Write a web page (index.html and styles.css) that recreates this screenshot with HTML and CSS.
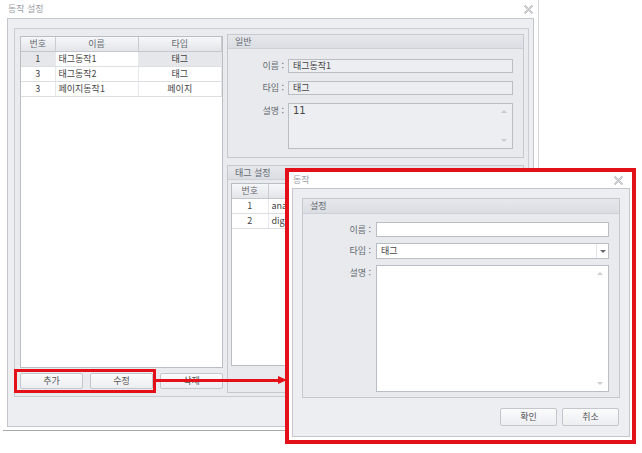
FILE: index.html
```html
<!DOCTYPE html>
<html lang="ko">
<head>
<meta charset="utf-8">
<title>동작 설정</title>
<link rel="stylesheet" href="styles.css">
</head>
<body>
<div class="window main">
  <div class="titlebar">
    <span class="title">동작 설정</span>
    <svg class="close" viewBox="0 0 10 10" width="9" height="9"><polygon points="1.2,0.5 5,4.1 8.8,0.5 9.5,1.2 5.9,5 9.5,8.8 8.8,9.5 5,5.9 1.2,9.5 0.5,8.8 4.1,5 0.5,1.2" fill="#fff" stroke="#8a8d92" stroke-width="0.8"/></svg>
  </div>
  <div class="frame">
    <div class="panel">
      <div class="left-col">
        <div class="grid list">
          <table>
            <colgroup><col class="c-no"><col class="c-name"><col></colgroup>
            <thead><tr><th>번호</th><th>이름</th><th>타입</th></tr></thead>
            <tbody>
              <tr class="sel"><td class="ctr">1</td><td class="focus">태그동작1</td><td class="ctr">태그</td></tr>
              <tr><td class="ctr">3</td><td>태그동작2</td><td class="ctr">태그</td></tr>
              <tr><td class="ctr">3</td><td>페이지동작1</td><td class="ctr">페이지</td></tr>
            </tbody>
          </table>
        </div>
        <div class="btn-row">
          <button class="btn">추가</button>
          <button class="btn">수정</button>
          <button class="btn">삭제</button>
        </div>
      </div>
      <div class="right-col">
        <div class="group general">
          <div class="group-head">일반</div>
          <div class="form form-general">
            <label>이름 :</label><div class="field disabled">태그동작1</div>
            <label>타입 :</label><div class="field disabled">태그</div>
            <label>설명 :</label><div class="field disabled memo memo-small"><span class="big">11</span><span class="sb-up"></span><span class="sb-down"></span></div>
          </div>
        </div>
        <div class="group tags">
          <div class="group-head">태그 설정</div>
          <div class="grid tag-grid">
            <table>
              <colgroup><col class="c-tno"><col></colgroup>
              <thead><tr><th>번호</th><th></th></tr></thead>
              <tbody>
                <tr><td class="ctr">1</td><td>anak</td></tr>
                <tr><td class="ctr">2</td><td>digit</td></tr>
              </tbody>
            </table>
          </div>
        </div>
      </div>
    </div>
  </div>
</div>

<div class="hl-box"></div>
<div class="arrow-line"></div>
<div class="arrow-head"></div>

<div class="dialog">
  <div class="titlebar dlg-title">
    <span class="title">동작</span>
    <svg class="close" viewBox="0 0 10 10" width="9" height="9"><polygon points="1.2,0.5 5,4.1 8.8,0.5 9.5,1.2 5.9,5 9.5,8.8 8.8,9.5 5,5.9 1.2,9.5 0.5,8.8 4.1,5 0.5,1.2" fill="#fff" stroke="#8a8d92" stroke-width="0.8"/></svg>
  </div>
  <div class="frame dlg-frame">
    <div class="group settings">
      <div class="group-head">설정</div>
      <div class="form form-dialog">
        <label>이름 :</label><div class="field"></div>
        <label>타입 :</label><div class="field combo">태그<span class="combo-btn"></span></div>
        <label>설명 :</label><div class="field memo memo-large"><span class="sb-up"></span><span class="sb-down"></span></div>
      </div>
    </div>
    <div class="dlg-buttons">
      <button class="btn dbtn">확인</button>
      <button class="btn dbtn">취소</button>
    </div>
  </div>
</div>
</body>
</html>
```
FILE: styles.css
```css
* { box-sizing: border-box; }
html, body { margin: 0; padding: 0; background: #ffffff; }
body {
  width: 642px; height: 453px; overflow: hidden; position: relative;
  font-family: "Noto Sans CJK KR", "DejaVu Sans", sans-serif;
  font-size: 9px; line-height: 12px; color: #4a4a4a;
}

/* main window */
.main {
  margin-left: 3px; width: 536px; height: 431px;
  border-right: 1px solid #d6d8dc; border-bottom: 1px solid #a8aaae;
  background: #ffffff;
}
.titlebar {
  height: 18px; display: flex; align-items: center; justify-content: space-between;
  padding: 0 5px 0 5px;
}
.title { color: #9a9ea5; font-size: 9px; }
.close { display: block; }

.frame {
  margin-left: 4px; width: 527px; height: 409px;
  border: 1px solid #c3c6cc; background: #eceef1;
  padding: 9px 0 0 6px;
}
.panel {
  width: 515px; height: 369px;
  border: 1px solid #c9ccd2; background: #e9ebef;
  display: flex; padding: 5px 4px 0 5px;
}
.left-col { width: 203px; display: flex; flex-direction: column; }
.right-col { width: 297px; margin-left: 4px; display: flex; flex-direction: column; }

/* grids */
.grid { background: #ffffff; border: 1px solid #b9bdc4; overflow: hidden; }
.list { margin-top: 2px; height: 332px; }
.grid table { width: 100%; border-collapse: collapse; table-layout: fixed; }
.c-no { width: 34px; }
.c-name { width: 83px; }
.c-tno { width: 36px; }
.grid th {
  height: 14px; padding: 0; font-weight: normal; color: #666a70;
  background: linear-gradient(#f6f7f9, #e3e5e9);
  border-right: 1px solid #c9ccd1; border-bottom: 1px solid #c4c7cd;
  text-align: center;
}
.grid td {
  height: 15px; padding: 0 3px; color: #444;
  border-bottom: 1px solid #dcdee2; border-right: 1px solid #e6e8eb;
  white-space: nowrap; overflow: hidden;
}
.grid td.ctr { text-align: center; }
.grid tr.sel td { background: #e6e7ea; }
.grid tr.sel td.focus { background: #ffffff; }

.btn-row { display: flex; gap: 7px; margin-top: 5px; }
.btn {
  height: 16px; padding: 0; font: inherit; font-size: 9px; line-height: 12px; color: #555;
  background: linear-gradient(#fbfbfc, #eceef1);
  border: 1px solid #c3c6cc; border-radius: 2px;
}
.btn-row .btn { width: 63px; }

/* groups */
.group { border: 1px solid #c5c8ce; background: #e8eaee; }
.general { margin-top: 0; height: 124px; }
.tags { margin-top: 7px; height: 228px; padding: 0; }
.group-head {
  height: 14px; padding-left: 7px; color: #666a70;
  background: linear-gradient(#e6e8ec, #dadde2);
  border-bottom: 1px solid #cdd0d5;
  display: flex; align-items: center;
}
.form { display: grid; align-items: start; }
.form label { text-align: right; color: #666a70; white-space: nowrap; }
.form-general {
  grid-template-columns: 56px 225px; column-gap: 4px;
  grid-template-rows: 14px 14px 46px; row-gap: 8px;
  padding-top: 10px;
}
.form-general label { line-height: 14px; }
.form-general label:nth-of-type(3) { padding-top: 1px; }
.field {
  height: 100%; border: 1px solid #b9bdc4; background: #ffffff;
  padding: 0 4px; line-height: 12px; color: #444; position: relative;
}
.field.disabled { background: #edeef1; }
.memo { padding-top: 1px; }
.big { font-family: "DejaVu Sans", sans-serif; font-size: 10px; color: #444; }
.sb-up, .sb-down {
  position: absolute; right: 5px; width: 0; height: 0;
  border-left: 3px solid transparent; border-right: 3px solid transparent;
}
.sb-up { top: 6px; border-bottom: 3px solid #c8cbd0; }
.sb-down { bottom: 6px; border-top: 3px solid #c8cbd0; }

.tag-grid { margin: 3px 3px 0 3px; height: 183px; border-color: #b9bdc4; }

/* overlays */
.hl-box {
  position: absolute; left: 14px; top: 369px; width: 142px; height: 24px;
  border: 3px solid #e3101a;
}
.arrow-line {
  position: absolute; left: 156px; top: 379px; width: 124px; height: 3px;
  background: #e3101a;
}
.arrow-head {
  position: absolute; left: 278px; top: 376px; width: 0; height: 0;
  border-left: 9px solid #e3101a; border-top: 4.5px solid transparent; border-bottom: 4.5px solid transparent;
}

/* dialog */
.dialog {
  position: absolute; left: 285px; top: 168px; width: 351px; height: 276px;
  border: 4px solid #e3101a; background: #ffffff;
}
.dlg-title { height: 16px; padding: 0 9px 0 4px; }
.dlg-frame {
  margin: 0 2px 0 3px; width: 338px; height: 249px;
  padding: 9px 9px 0 9px;
}
.settings { height: 200px; }
.settings .group-head { height: 15px; }
.form-dialog {
  grid-template-columns: 68px 233px; column-gap: 5px;
  grid-template-rows: 15px 16px 127px; row-gap: 6px;
  padding-top: 8px;
}
.form-dialog label { line-height: 15px; }
.combo { line-height: 14px; }
.combo-btn {
  position: absolute; right: 0; top: 0; bottom: 0; width: 12px;
  border-left: 1px solid #e4e6ea;
}
.combo-btn::after {
  content: ""; position: absolute; left: 3px; top: 6px; width: 0; height: 0;
  border-left: 3px solid transparent; border-right: 3px solid transparent;
  border-top: 3px solid #666a70;
}
.dlg-buttons { display: flex; justify-content: flex-end; gap: 5px; margin-top: 10px; padding-right: 1px; }
.dbtn { height: 18px; width: 57px; }
```
